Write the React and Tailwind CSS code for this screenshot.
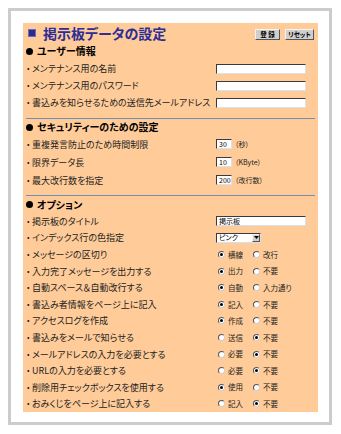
import React from "react";

const F = "[font-family:'Noto_Sans_CJK_JP','Noto_Sans_CJK_SC',sans-serif] [font-feature-settings:'palt']";

function TextInput({ w = "w-[90px]", value = "" }) {
  return (
    <div className={`${w} h-[10px] bg-white border-t border-l border-[#3a3a3a] border-r border-b border-r-[#d9e0e8] border-b-[#d9e0e8] flex items-center pl-[2px] text-[7px] leading-none text-black`}>
      {value}
    </div>
  );
}

function Radio({ checked }) {
  return (
    <span className="w-[7px] h-[7px] rounded-full bg-white border border-t-[#555] border-l-[#555] border-r-[#cfcfcf] border-b-[#cfcfcf] flex items-center justify-center shrink-0">
      {checked && <span className="w-[3px] h-[3px] rounded-full bg-black" />}
    </span>
  );
}

function RadioPair({ a, b, checked }) {
  return (
    <div className="flex items-center text-[7.5px] leading-none text-[#222]">
      <div className="w-[37px] flex items-center gap-[3px] pl-[2px]">
        <Radio checked={checked === 0} />
        <span>{a}</span>
      </div>
      <div className="flex items-center gap-[3px]">
        <Radio checked={checked === 1} />
        <span>{b}</span>
      </div>
    </div>
  );
}

function Row({ label, children, h = "h-[17px]" }) {
  return (
    <div className={`${h} flex items-center`}>
      <div className="w-[193px] pl-[3px] flex items-center text-[9px] leading-none text-[#222] whitespace-nowrap">
        <span className="w-[6px]">・</span>
        <span>{label}</span>
      </div>
      <div className="flex items-center">{children}</div>
    </div>
  );
}

function Heading({ children, h }) {
  return (
    <div className={`${h} flex items-center pl-[3px] text-[10px] font-bold leading-none text-black`}>
      <span className="w-[7px] h-[7px] rounded-full bg-black mr-[4px]" />
      {children}
    </div>
  );
}

function Sep({ mt }) {
  return <div className={`${mt} mx-[3px] h-px bg-[#7290ae]`} />;
}

function Btn({ children, w }) {
  return (
    <div className={`${w} h-[11px] bg-[#cfcfcf] border border-t-[#f4f4f4] border-l-[#f4f4f4] border-r-[#555] border-b-[#555] flex items-center justify-center text-[6.5px] font-bold leading-none text-black`}>
      {children}
    </div>
  );
}

const options = [
  ["メッセージの区切り", "横線", "改行", 0],
  ["入力完了メッセージを出力する", "出力", "不要", 0],
  ["自動スペース＆自動改行する", "自動", "入力通り", 0],
  ["書込み者情報をページ上に記入", "記入", "不要", 0],
  ["アクセスログを作成", "作成", "不要", 0],
  ["書込みをメールで知らせる", "送信", "不要", 1],
  ["メールアドレスの入力を必要とする", "必要", "不要", 1],
  ["URLの入力を必要とする", "必要", "不要", 1],
  ["削除用チェックボックスを使用する", "使用", "不要", 0],
  ["おみくじをページ上に記入する", "記入", "不要", 1],
];

export default function App() {
  return (
    <div className={`w-[341px] h-[434px] bg-white pt-[8px] pl-[8px] ${F}`}>
      <div className="w-[324px] h-[417px] border-[3px] border-[#cccccc] bg-white pt-[12px] pl-[12px]">
        <div className="w-[295px] h-[389px] bg-[#ffcc99]">
          {/* title */}
          <div className="h-[19px] flex items-center pl-[5px] pr-[4px]">
            <span className="w-[8px] h-[8px] bg-[#2b2b8f] border border-[#6a6ac0] mr-[7px] mt-[1px]" />
            <span className="text-[14px] font-bold leading-none text-[#2d2d96]">掲示板データの設定</span>
            <div className="ml-auto flex items-center gap-[5px] mt-[3px]">
              <Btn w="w-[25px]">登&nbsp;録</Btn>
              <Btn w="w-[29px]">リセット</Btn>
            </div>
          </div>

          <Heading h="h-[18px]">ユーザー情報</Heading>
          <Row label="メンテナンス用の名前"><TextInput /></Row>
          <Row label="メンテナンス用のパスワード"><TextInput /></Row>
          <Row label="書込みを知らせるための送信先メールアドレス"><TextInput /></Row>

          <Sep mt="mt-[7px]" />
          <Heading h="h-[16px]">セキュリティーのための設定</Heading>
          <Row h="h-[18px]" label="重複発言防止のため時間制限">
            <TextInput w="w-[16px]" value="30" />
            <span className="ml-[3px] text-[7px] leading-none text-[#222]">（秒）</span>
          </Row>
          <Row h="h-[18px]" label="限界データ長">
            <TextInput w="w-[16px]" value="10" />
            <span className="ml-[3px] text-[7px] leading-none text-[#222]">（KByte）</span>
          </Row>
          <Row h="h-[18px]" label="最大改行数を指定">
            <TextInput w="w-[16px]" value="200" />
            <span className="ml-[3px] text-[7px] leading-none text-[#222]">（改行数）</span>
          </Row>

          <Sep mt="mt-[6px]" />
          <Heading h="h-[17px]">オプション</Heading>
          <Row h="h-[16.6px]" label="掲示板のタイトル"><TextInput value="掲示板" /></Row>
          <Row h="h-[16.6px]" label="インデックス行の色指定">
            <div className="w-[45px] h-[10px] bg-white border-t border-l border-[#3a3a3a] border-r border-b border-r-[#d9e0e8] border-b-[#d9e0e8] flex items-center">
              <span className="pl-[2px] text-[7px] leading-none text-black flex-1">ピンク</span>
              <span className="w-[8px] h-[8px] bg-[#cfcfcf] border border-t-[#f4f4f4] border-l-[#f4f4f4] border-r-[#555] border-b-[#555] flex items-center justify-center">
                <svg width="5" height="3" viewBox="0 0 5 3"><path d="M0 0h5L2.5 3z" fill="#000" /></svg>
              </span>
            </div>
          </Row>
          {options.map(([l, a, b, c]) => (
            <Row key={l} h="h-[16.6px]" label={l}>
              <RadioPair a={a} b={b} checked={c} />
            </Row>
          ))}
        </div>
      </div>
    </div>
  );
}
